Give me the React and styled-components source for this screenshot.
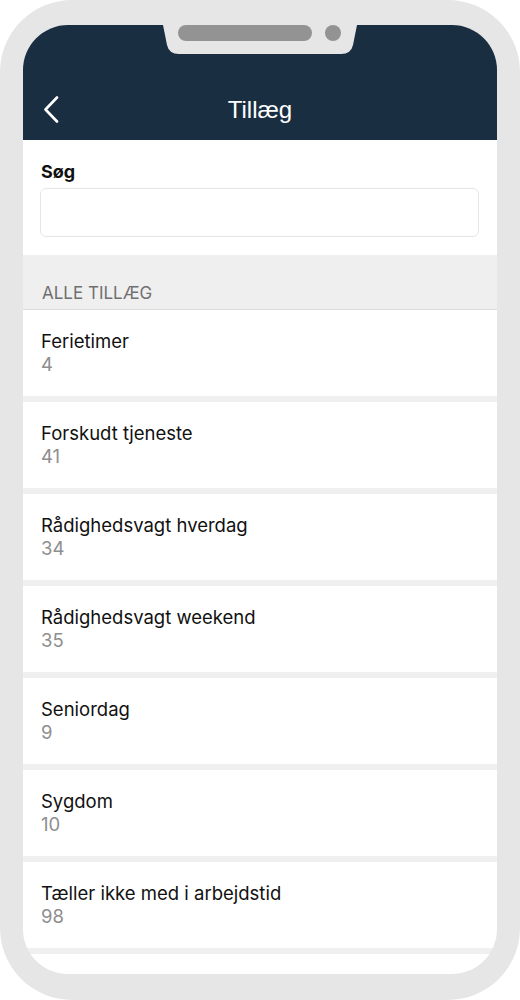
import React from 'react';
import styled, { createGlobalStyle } from 'styled-components';

const GlobalStyle = createGlobalStyle`
  html, body {
    margin: 0;
    padding: 0;
    background: #ffffff;
  }
  body {
    font-family: Inter, "Liberation Sans", Arial, sans-serif;
    -webkit-font-smoothing: antialiased;
  }
`;

const allowances = [
  { name: 'Ferietimer', code: 4 },
  { name: 'Forskudt tjeneste', code: 41 },
  { name: 'Rådighedsvagt hverdag', code: 34 },
  { name: 'Rådighedsvagt weekend', code: 35 },
  { name: 'Seniordag', code: 9 },
  { name: 'Sygdom', code: 10 },
  { name: 'Tæller ikke med i arbejdstid', code: 98 },
];

const PhoneFrame = styled.div`
  width: 520px;
  height: 1000px;
  box-sizing: border-box;
  padding: 25px 23px 26px;
  background: #e6e6e6;
  border-radius: 72px;
  position: relative;
`;

const Screen = styled.div`
  height: 100%;
  background: #f0f0f0;
  border-radius: 45px;
  overflow: hidden;
  display: flex;
  flex-direction: column;
`;

const Notch = styled.svg`
  position: absolute;
  top: 25px;
  left: 163px;
  width: 194px;
  height: 30px;
`;

const Header = styled.header`
  background: #1a2e42;
  padding-top: 55px;
`;

const NavBar = styled.div`
  height: 60px;
  position: relative;
  display: flex;
  align-items: center;
  justify-content: center;
`;

const BackButton = styled.button`
  position: absolute;
  left: 16px;
  top: 15px;
  background: none;
  border: none;
  padding: 0;
  width: 24px;
  height: 30px;
  display: flex;
  align-items: center;
  justify-content: center;
  cursor: pointer;
`;

const Title = styled.h1`
  margin: 0;
  color: #ffffff;
  font-family: "Liberation Sans", Arial, sans-serif;
  font-size: 24px;
  font-weight: 400;
  line-height: 30px;
`;

const SearchSection = styled.section`
  background: #ffffff;
  padding: 20px 18px 18px 17px;
`;

const Label = styled.label`
  display: block;
  font-size: 18px;
  font-weight: 700;
  line-height: 23px;
  color: #111111;
  padding-left: 1px;
  margin-bottom: 5px;
`;

const SearchInput = styled.input`
  display: block;
  width: 100%;
  box-sizing: border-box;
  height: 49px;
  border: 1px solid #e6e6e6;
  border-radius: 6px;
  background: #ffffff;
  font-family: inherit;
  font-size: 18px;
  padding: 0 12px;
  outline: none;
`;

const SectionHeader = styled.div`
  background: #efefef;
  padding: 28px 18px 6px 19px;
  font-size: 17px;
  line-height: 20px;
  color: #6f6f6f;
  border-bottom: 1px solid #dcdcdc;
`;

const List = styled.ul`
  list-style: none;
  margin: 0;
  padding: 0;
  display: flex;
  flex-direction: column;
  gap: 6px;
`;

const Item = styled.li`
  background: #ffffff;
  padding: 20px 18px;
  height: 86px;
  box-sizing: border-box;
`;

const ItemName = styled.div`
  font-size: 18.5px;
  line-height: 23px;
  color: #111111;
`;

const ItemCode = styled.div`
  font-size: 18.5px;
  line-height: 23px;
  color: #8e8e8e;
`;

export default function App() {
  return (
    <>
      <GlobalStyle />
      <PhoneFrame>
        <Screen>
          <Header>
            <NavBar>
              <BackButton aria-label="Tilbage">
                <svg width="17" height="28" viewBox="0 0 17 28" fill="none">
                  <path
                    d="M14 1.5 L2.5 13.5 L14 25.5"
                    stroke="#ffffff"
                    strokeWidth="2.6"
                    strokeLinecap="round"
                    strokeLinejoin="round"
                  />
                </svg>
              </BackButton>
              <Title>Tillæg</Title>
            </NavBar>
          </Header>

          <SearchSection>
            <Label htmlFor="search">Søg</Label>
            <SearchInput id="search" type="text" />
          </SearchSection>

          <SectionHeader>ALLE TILLÆG</SectionHeader>

          <List>
            {allowances.map((a) => (
              <Item key={a.name}>
                <ItemName>{a.name}</ItemName>
                <ItemCode>{a.code}</ItemCode>
              </Item>
            ))}
            <Item aria-hidden="true" />
          </List>
        </Screen>

        <Notch viewBox="0 0 194 30">
          <path
            d="M0 0 H194 L190 20 Q188 29 178 29 H16 Q6 29 4 20 Z"
            fill="#e6e6e6"
          />
          <rect x="15" y="0" width="134" height="16" rx="8" fill="#939393" />
          <circle cx="170" cy="8" r="8" fill="#939393" />
        </Notch>
      </PhoneFrame>
    </>
  );
}
